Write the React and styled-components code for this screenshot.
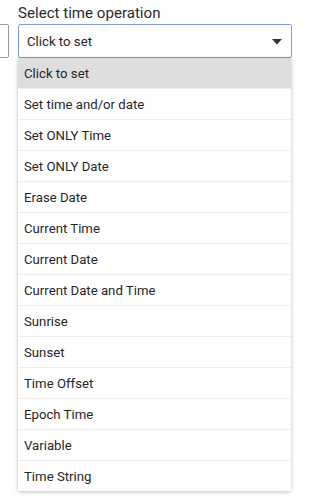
import React from "react";
import styled, { createGlobalStyle } from "styled-components";

const Global = createGlobalStyle`
  html, body { margin: 0; padding: 0; background: #ffffff; }
  body { font-family: Roboto, "Noto Sans", Arial, sans-serif; overflow: hidden; }
`;

const Viewport = styled.div`
  width: 310px;
  height: 500px;
  overflow: hidden;
`;

const Row = styled.div`
  display: flex;
  align-items: flex-start;
  gap: 9px;
  margin-left: -100px;
  width: 420px;
`;

const Field = styled.div`
  display: flex;
  flex-direction: column;
  width: ${(p) => p.$w}px;
  flex: none;
`;

const Label = styled.div`
  height: 24px;
  font-size: 15.1px;
  line-height: 24px;
  color: #2b2b2b;
  white-space: nowrap;
  transform: translateY(1px);
`;

const Box = styled.div`
  box-sizing: border-box;
  height: 34px;
  border: 1px solid ${(p) => (p.$active ? "#7f9ed8" : "#9a9a9a")};
  border-radius: 2px;
  display: flex;
  align-items: center;
  justify-content: space-between;
  padding: 1px 9px 0 8px;
  font-size: 13.2px;
  color: #262626;
`;

const Arrow = styled.svg`
  width: 10px;
  height: 6px;
  flex: none;
`;

const Menu = styled.ul`
  list-style: none;
  margin: 0 1px 0 0;
  padding: 0;
  background: #fff;
  box-shadow: 0 1px 4px rgba(0, 0, 0, 0.25), 0 0 1px rgba(0, 0, 0, 0.12);
  border-radius: 0 0 2px 2px;
`;

const Item = styled.li`
  box-sizing: border-box;
  height: 31px;
  display: flex;
  align-items: center;
  padding-left: 6px;
  font-size: 13.2px;
  color: #262626;
  background: ${(p) => (p.$selected ? "#dedede" : "#fff")};
  border-bottom: 1px solid #eeeeee;
  &:last-child { border-bottom: none; height: 30px; }
`;

const options = [
  "Click to set",
  "Set time and/or date",
  "Set ONLY Time",
  "Set ONLY Date",
  "Erase Date",
  "Current Time",
  "Current Date",
  "Current Date and Time",
  "Sunrise",
  "Sunset",
  "Time Offset",
  "Epoch Time",
  "Variable",
  "Time String",
];

export default function App() {
  return (
    <>
      <Global />
      <Viewport>
        <Row>
          <Field $w={109}>
            <Label />
            <Box>
              <span />
            </Box>
          </Field>
          <Field $w={274}>
            <Label>Select time operation</Label>
            <Box $active>
              <span>Click to set</span>
              <Arrow viewBox="0 0 10 6">
                <path d="M0 0 L10 0 L5 5.5 Z" fill="#333" />
              </Arrow>
            </Box>
            <Menu>
              {options.map((o, i) => (
                <Item key={o} $selected={i === 0}>
                  {o}
                </Item>
              ))}
            </Menu>
          </Field>
        </Row>
      </Viewport>
    </>
  );
}
